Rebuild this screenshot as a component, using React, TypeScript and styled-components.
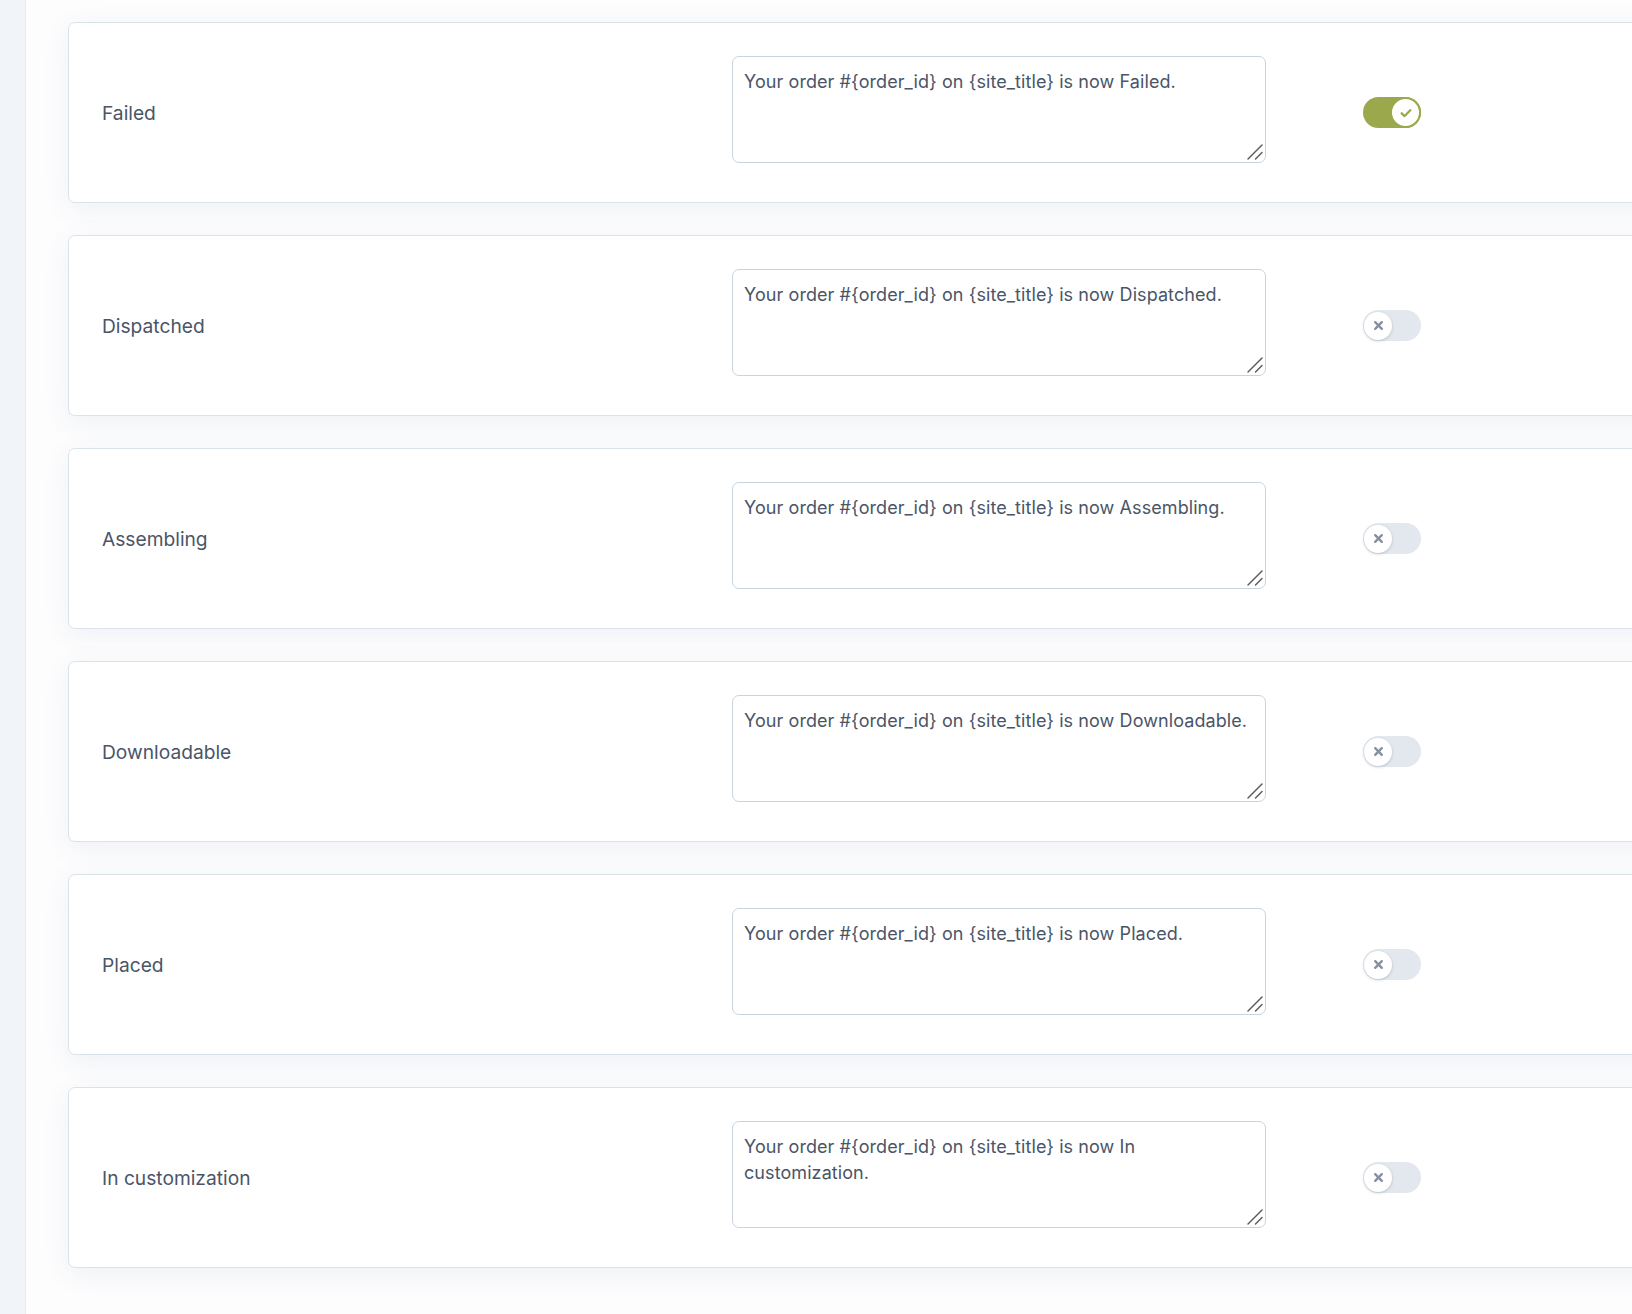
import React from "react";
import styled, { createGlobalStyle } from "styled-components";

const GlobalStyle = createGlobalStyle`
  html, body {
    margin: 0;
    padding: 0;
    background: #ffffff;
    overflow: hidden;
  }
  body {
    font-family: Inter, "Noto Sans", "Liberation Sans", sans-serif;
    -webkit-font-smoothing: antialiased;
  }
`;

const Shell = styled.div`
  display: flex;
  width: 1632px;
  height: 1314px;
`;

const Sidebar = styled.aside`
  flex: 0 0 25px;
  background: #f1f4f8;
  border-right: 1px solid #e8ecf1;
`;

const Main = styled.main`
  flex: 1 0 auto;
  padding: 22px 0 0 42px;
  display: flex;
  flex-direction: column;
  gap: 32px;
  background: #fdfdfe;
`;

const Card = styled.section`
  width: 1640px;
  box-sizing: border-box;
  display: flex;
  align-items: center;
  padding: 33px 33px;
  background: #ffffff;
  border: 1px solid #dbe3ea;
  border-radius: 7px;
  box-shadow: 0 6px 28px rgba(40, 70, 120, 0.07);
`;

const Label = styled.div`
  flex: 0 0 630px;
  font-size: 19.2px;
  color: #4a5568;
`;

const FieldWrap = styled.div`
  position: relative;
  flex: 0 0 534px;
  padding-bottom: 6px;
`;

const Message = styled.textarea`
  display: block;
  width: 534px;
  height: 107px;
  box-sizing: border-box;
  margin: 0;
  padding: 12px 11px;
  border: 1px solid #c9d3df;
  border-radius: 7px;
  font-family: Inter, "Noto Sans", "Liberation Sans", sans-serif;
  font-size: 18px;
  line-height: 26px;
  letter-spacing: 0.08px;
  color: #4a5568;
  background: #ffffff;
  resize: none;
  outline: none;
`;

const ResizeGrip = styled.svg`
  position: absolute;
  right: 3px;
  bottom: 9px;
  width: 17px;
  height: 17px;
  pointer-events: none;
`;

const ToggleTrack = styled.button<{ $on: boolean }>`
  margin-left: 97px;
  flex: 0 0 58px;
  width: 58px;
  height: 31px;
  padding: 0;
  border: none;
  border-radius: 16px;
  background: ${(p) => (p.$on ? "#9ba84b" : "#e3e8ef")};
  display: flex;
  align-items: center;
  justify-content: ${(p) => (p.$on ? "flex-end" : "flex-start")};
  cursor: pointer;
`;

const Knob = styled.span<{ $on: boolean }>`
  box-sizing: border-box;
  width: ${(p) => (p.$on ? "31px" : "28px")};
  height: ${(p) => (p.$on ? "31px" : "28px")};
  margin: ${(p) => (p.$on ? "0" : "0 0 0 1px")};
  border-radius: 50%;
  background: #ffffff;
  border: ${(p) => (p.$on ? "2.5px solid #9ba84b" : "none")};
  box-shadow: ${(p) => (p.$on ? "none" : "0 1px 3px rgba(30, 40, 60, 0.22)")};
  display: flex;
  align-items: center;
  justify-content: center;
`;

const CheckIcon = () => (
  <svg width="14" height="14" viewBox="0 0 12 12" fill="none">
    <path d="M2.3 6.3 L4.8 8.6 L9.7 3.6" stroke="#9ba84b" strokeWidth="2" strokeLinecap="round" strokeLinejoin="round" />
  </svg>
);

const CrossIcon = () => (
  <svg width="11" height="11" viewBox="0 0 10 10" fill="none">
    <path d="M2 2 L8 8 M8 2 L2 8" stroke="#8790a3" strokeWidth="2.2" strokeLinecap="round" />
  </svg>
);

type Status = { name: string; on: boolean };

const statuses: Status[] = [
  { name: "Failed", on: true },
  { name: "Dispatched", on: false },
  { name: "Assembling", on: false },
  { name: "Downloadable", on: false },
  { name: "Placed", on: false },
  { name: "In customization", on: false },
];

const StatusRow: React.FC<Status> = ({ name, on }) => (
  <Card>
    <Label>{name}</Label>
    <FieldWrap>
      <Message
        defaultValue={`Your order #{order_id} on {site_title} is now ${name}.`}
        spellCheck={false}
      />
      <ResizeGrip viewBox="0 0 17 17" fill="none">
        <path d="M2 16 L16 2" stroke="#5a5a5a" strokeWidth="1.4" strokeLinecap="round" />
        <path d="M9.5 16 L16 9.5" stroke="#5a5a5a" strokeWidth="1.4" strokeLinecap="round" />
      </ResizeGrip>
    </FieldWrap>
    <ToggleTrack $on={on} type="button" aria-pressed={on}>
      <Knob $on={on}>{on ? <CheckIcon /> : <CrossIcon />}</Knob>
    </ToggleTrack>
  </Card>
);

export default function App() {
  return (
    <>
      <GlobalStyle />
      <Shell>
        <Sidebar />
        <Main>
          {statuses.map((s) => (
            <StatusRow key={s.name} {...s} />
          ))}
        </Main>
      </Shell>
    </>
  );
}
